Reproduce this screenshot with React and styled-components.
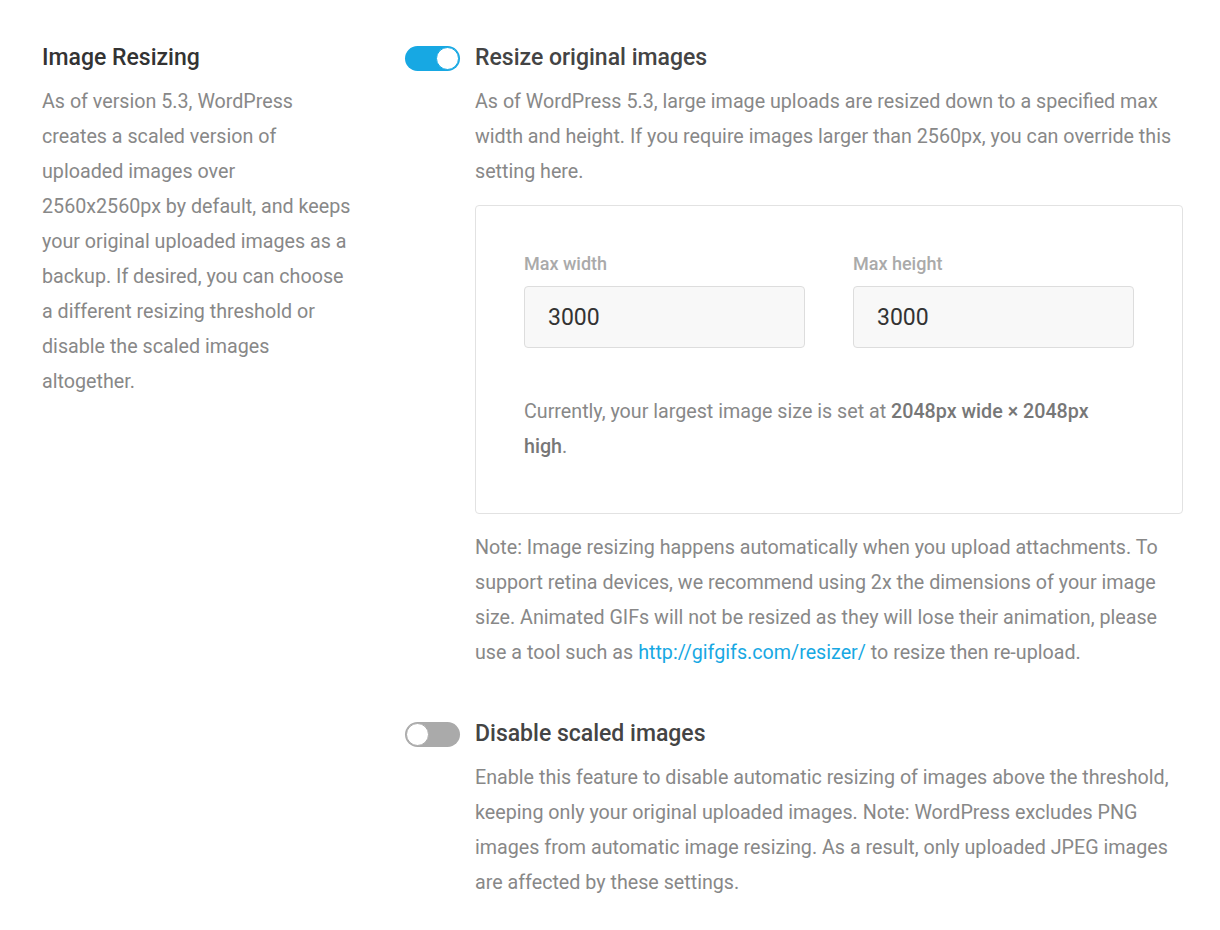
import React from "react";
import styled, { createGlobalStyle } from "styled-components";

const Global = createGlobalStyle`
  body {
    margin: 0;
    background: #fff;
    font-family: Roboto, "Liberation Sans", sans-serif;
    -webkit-font-smoothing: antialiased;
  }
`;

const Page = styled.div`
  display: grid;
  grid-template-columns: 313px minmax(0, 1fr);
  column-gap: 50px;
  padding: 42px 37px 40px 42px;
`;

const Side = styled.div`
  display: flex;
  flex-direction: column;
`;

const SideTitle = styled.h3`
  margin: 0 0 10px;
  font-size: 23px;
  line-height: 32px;
  font-weight: 500;
  color: #333;
`;

const Text = styled.p`
  margin: 0;
  font-size: 19.7px;
  line-height: 35px;
  color: #888;

  a {
    color: #17a8e3;
    text-decoration: none;
  }

  strong {
    font-weight: 500;
    color: #777;
  }
`;

const Settings = styled.div`
  display: flex;
  flex-direction: column;
  gap: 48px;
`;

const Setting = styled.div`
  display: grid;
  grid-template-columns: 55px minmax(0, 1fr);
  column-gap: 15px;
`;

const Switch = styled.span`
  position: relative;
  display: block;
  width: 55px;
  height: 25px;
  margin-top: 4px;
  border-radius: 13px;
  background: ${(p) => (p.$on ? "#17a8e3" : "#aaa")};

  &::after {
    content: "";
    position: absolute;
    top: 1px;
    left: ${(p) => (p.$on ? "31px" : "1px")};
    width: 21px;
    height: 21px;
    border-radius: 50%;
    background: #fff;
    border: 1px solid ${(p) => (p.$on ? "#17a8e3" : "#aaa")};
  }
`;

const Body = styled.div`
  display: flex;
  flex-direction: column;
  min-width: 0;
`;

const Heading = styled.h4`
  margin: 0 0 10px;
  font-size: 23px;
  line-height: 32px;
  font-weight: 500;
  color: #444;
`;

const Box = styled.div`
  margin: 16px 0 16px;
  border: 1px solid #e2e2e2;
  border-radius: 4px;
  padding: 44px 48px 49px;
`;

const Fields = styled.div`
  display: grid;
  grid-template-columns: minmax(0, 1fr) minmax(0, 1fr);
  column-gap: 48px;
  margin-bottom: 46px;
`;

const Field = styled.label`
  display: flex;
  flex-direction: column;
  min-width: 0;
`;

const Label = styled.span`
  font-size: 18px;
  line-height: 28px;
  font-weight: 500;
  color: #aaa;
  margin-bottom: 8px;
`;

const Input = styled.input`
  box-sizing: border-box;
  width: 100%;
  min-width: 0;
  height: 62px;
  padding: 0 23px;
  border: 1px solid #ddd;
  border-radius: 4px;
  background: #f8f8f8;
  font-family: Roboto, "Liberation Sans", sans-serif;
  font-size: 23px;
  color: #333;
  outline: none;
`;

export default function App() {
  return (
    <>
      <Global />
      <Page>
        <Side>
          <SideTitle>Image Resizing</SideTitle>
          <Text>
            As of version 5.3, WordPress creates a scaled version of uploaded
            images over 2560x2560px by default, and keeps your original uploaded
            images as a backup. If desired, you can choose a different resizing
            threshold or disable the scaled images altogether.
          </Text>
        </Side>
        <Settings>
          <Setting>
            <Switch $on />
            <Body>
              <Heading>Resize original images</Heading>
              <Text>
                As of WordPress 5.3, large image uploads are resized down to a
                specified max width and height. If you require images larger than
                2560px, you can override this setting here.
              </Text>
              <Box>
                <Fields>
                  <Field>
                    <Label>Max width</Label>
                    <Input defaultValue="3000" />
                  </Field>
                  <Field>
                    <Label>Max height</Label>
                    <Input defaultValue="3000" />
                  </Field>
                </Fields>
                <Text>
                  Currently, your largest image size is set at{" "}
                  <strong>2048px wide × 2048px high</strong>.
                </Text>
              </Box>
              <Text>
                Note: Image resizing happens automatically when you upload
                attachments. To support retina devices, we recommend using 2x the
                dimensions of your image size. Animated GIFs will not be resized
                as they will lose their animation, please use a tool such as{" "}
                <a href="#resizer">http://gifgifs.com/resizer/</a> to resize then
                re-upload.
              </Text>
            </Body>
          </Setting>
          <Setting>
            <Switch />
            <Body>
              <Heading>Disable scaled images</Heading>
              <Text>
                Enable this feature to disable automatic resizing of images above
                the threshold, keeping only your original uploaded images. Note:
                WordPress excludes PNG images from automatic image resizing. As a
                result, only uploaded JPEG images are affected by these settings.
              </Text>
            </Body>
          </Setting>
        </Settings>
      </Page>
    </>
  );
}
